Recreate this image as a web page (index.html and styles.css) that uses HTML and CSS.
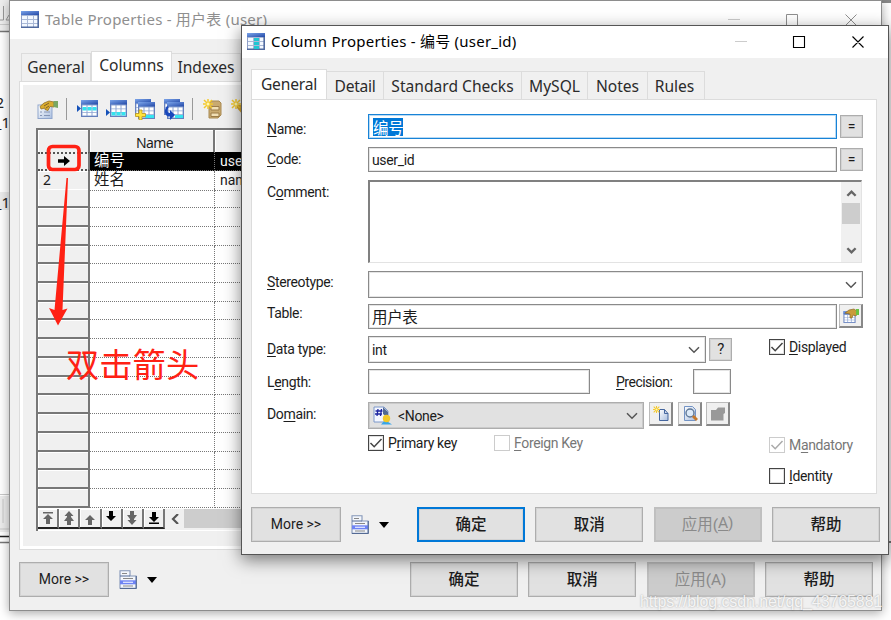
FILE: index.html
```html
<!DOCTYPE html>
<html lang="zh-CN">
<head>
<meta charset="utf-8">
<title>Column Properties</title>
<link rel="stylesheet" href="styles.css">
</head>
<body>
<svg width="0" height="0" class="defs">
  <defs>
    <linearGradient id="blue" x1="0" y1="0" x2="1" y2="1"><stop offset="0" stop-color="#7ca5ea"/><stop offset="1" stop-color="#2349a8"/></linearGradient>
    <linearGradient id="sheet" x1="0" y1="0" x2="1" y2="1"><stop offset="0" stop-color="#fff"/><stop offset="1" stop-color="#a9bedf"/></linearGradient>
    <symbol id="tbl" viewBox="0 0 18 17">
      <rect x=".5" y=".5" width="17" height="16" fill="#a9b8d6" stroke="#8f9fc8"/><rect width="18" height="4" fill="url(#blue)"/>
      <path d="M1 5h5v3H1zM7 5h5v3H7zM13 5h4v3h-4zM1 9h5v3H1zM7 9h5v3H7zM13 9h4v3h-4zM1 13h5v3H1zM7 13h5v3H7zM13 13h4v3h-4z" fill="#f3f8ff"/><path d="M17.200 4v12.300H0" fill="none" stroke="#506a9f" stroke-width="1.6"/>
    </symbol>
    <symbol id="grid" viewBox="0 0 17 17">
      <rect x=".5" y=".5" width="16" height="16" fill="#8da4d2" stroke="#647fbd"/><rect width="17" height="4.5" fill="url(#blue)"/>
      <path d="M1.500 5.500h4v3h-4zM6.500 5.500h4v3h-4zM11.500 5.500h4v3h-4zM1.500 9.300h4v3h-4zM6.500 9.300h4v3h-4zM11.500 9.300h4v3h-4zM1.500 13h4v2.500h-4zM6.500 13h4v2.500h-4zM11.500 13h4v2.500h-4z" fill="#fff"/>
    </symbol>
    <symbol id="prop" viewBox="0 0 21 19">
      <rect x="1" y="5" width="14" height="13.500" fill="url(#sheet)" stroke="#8fa5cc"/><path d="M3 12h2m2 0h6M3 15.500h2m2 0h6" stroke="#8595b5" stroke-width="1.2"/>
      <path d="M3 6.500l4-3.500 5-2 5 1v5l-4-.5-2 4-3-1V8L4 9z" fill="#d9ab2e" stroke="#94712a" stroke-width=".8"/><path d="M7 6l5-3M9 8l3-2" stroke="#81602a"/><path d="M16.500 1H21v7l-4.500-1z" fill="#79a763"/>
    </symbol>
    <symbol id="menu" viewBox="0 0 18 19">
      <path d="M1 .7h10V6h6v12.300H1z" fill="#f3f6fb" stroke="#8496b8" stroke-width="1.1"/><path d="M1 6h10" stroke="#536a96"/><path d="M3 3.500h5M4 8.500h10M4 16h10" stroke="#888" stroke-width="1.2"/><path d="M1 10.300h16v4H1z" fill="#6d83f4"/><path d="M4 12.300h10" stroke="#dfe4ff" stroke-width="1.3"/><path d="M17.300 6v12.600H1" stroke="#4d648f" fill="none"/>
    </symbol>
    <symbol id="burst" viewBox="0 0 10 10"><path d="M5 0v10M0 5h10M1 1l8 8M9 1L1 9" stroke="#f4c92d" stroke-width="1.5"/><circle cx="5" cy="5" r="1.500" fill="#fff8b0"/></symbol>
    <symbol id="chev" viewBox="0 0 12 8"><path d="M1 1.300l5 5 5-5" fill="none" stroke="currentColor" stroke-width="1.5"/></symbol>
    <symbol id="chevbold" viewBox="0 0 12 8"><path d="M1.500 1l4.500 4.500L10.500 1" fill="none" stroke="currentColor" stroke-width="2.600"/></symbol>
    <symbol id="tick" viewBox="0 0 16 16"><path d="M2.500 8l3.700 3.700L13.500 4" fill="none" stroke="currentColor" stroke-width="1.500"/></symbol>
  </defs>
</svg>
<div class="desktop">
  <div class="behind">
    <svg width="10" height="620" viewBox="0 0 10 620">
      <path d="M0 0h10v31H0z" fill="#eee"/><path d="M3.500 6v14H0M9 15l-3 5h4" fill="none" stroke="#999"/><path d="M0 24.500h10" stroke="#ccc"/><path d="M0 31.500h10" stroke="#777" stroke-width="1.500"/><path d="M0 192h10v18H0zM0 496h10v36H0z" fill="#ececec"/><path d="M0 494.500h10M3 499v24M0 529h10" fill="none" stroke="#c8c8c8"/><path d="M0 536.500h10" stroke="#222" stroke-width="1.500"/><path d="M0 542.500h10" stroke="#777" stroke-width="1.500"/>
    </svg>
    <span class="bt b1">2</span><span class="bt b2">_1</span><span class="bt b3">_1</span>
  </div>
  <div class="behind-right"></div>

  <section class="window back">
    <header class="title">
      <svg class="ticon" width="18" height="17"><use href="#tbl"/></svg>
      <span class="ttext">Table Properties - 用户表 (user)</span>
      <svg class="controls" width="130" height="12" viewBox="0 0 130 12"><path d="M0 5.500h12" stroke="#ccc"/><path d="M58.500.5h11v11h-11zM117.500.5l11 11m0-11l-11 11" fill="none" stroke="currentColor"/></svg>
    </header>
    <nav class="tabs">
      <span class="tab w1">General</span><span class="tab on w2">Columns</span><span class="tab w3">Indexes</span>
    </nav>
    <div class="sheet">
      <div class="toolbar">
        <svg width="21" height="19"><use href="#prop"/></svg>
        <i class="sep"></i>
        <svg class="g1" width="21" height="18" viewBox="0 0 21 18"><use href="#grid" x="4" width="17" height="17"/><path d="M5.500 7h4v3.500h-4zM10.500 7h4v3.500h-4zM15.500 7h4v3.500h-4z" fill="#35e3ef"/><path d="M0 5l4 3.500L0 12z" fill="#1552b9"/></svg>
        <svg class="g2" width="21" height="18" viewBox="0 0 21 18"><use href="#grid" x="4" width="17" height="17"/><path d="M5.500 12h4v3.500h-4zM10.500 12h4v3.500h-4zM15.500 12h4v3.500h-4z" fill="#35e3ef"/><path d="M0 9l4 3.500L0 16z" fill="#1552b9"/></svg>
        <svg class="g2" width="21" height="21" viewBox="0 0 21 21"><use href="#grid" x="0" width="16" height="16"/><use href="#grid" x="3" y="3" width="17" height="17"/><path d="M10 16h9v3h-9z" fill="#35e3ef"/><path d="M4 11h3v3.500h3.500v3H7V21H4v-3.500H.5v-3H4z" fill="#ffe43c" stroke="#b8941c" stroke-width=".8"/></svg>
        <svg class="g2" width="21" height="21" viewBox="0 0 21 21"><use href="#grid" x="0" width="16" height="16"/><use href="#grid" x="3" y="3" width="17" height="17"/><path d="M11 16h8v3h-8z" fill="#35e3ef"/><path d="M3 7c-4 5-2 11 3 10.500V21l5-5-5-5v3C3 14 2.500 10.500 5 8z" fill="#1948bc"/></svg>
        <i class="sep s2"></i>
        <svg width="19" height="20" viewBox="0 0 19 20"><path d="M6 5l3-3h7l2 2v12l-3 3H6z" fill="#c9aa70" stroke="#a98a53"/><path d="M8 7.500h8v3.500H8zM8 14h8v3.500H8z" fill="#f1dfb5" stroke="#9c7c48"/><use href="#burst" width="10" height="10"/></svg>
        <svg class="g3" width="19" height="20" viewBox="0 0 19 20"><path d="M6 6h9v10h-3L6 9z" fill="#d5a530"/><use href="#burst" width="10" height="10"/></svg>
      </div>
      <div class="table">
        <div class="thead"><span class="rowhead"></span><span class="th">Name</span><span class="th"></span></div>
        <div class="tr sel"><span class="rowhead"><svg width="12" height="10" viewBox="0 0 12 10"><path d="M0 3.300h6V0l6 5-6 5V6.700H0z"/></svg></span><span class="td">编号</span><span class="td">user_id</span></div>
        <div class="tr"><span class="rowhead num">2</span><span class="td">姓名</span><span class="td">name</span></div>
        <div class="tr"><span class="rowhead"></span><span class="td"></span><span class="td"></span></div>
        <div class="tr"><span class="rowhead"></span><span class="td"></span><span class="td"></span></div>
        <div class="tr"><span class="rowhead"></span><span class="td"></span><span class="td"></span></div>
        <div class="tr"><span class="rowhead"></span><span class="td"></span><span class="td"></span></div>
        <div class="tr"><span class="rowhead"></span><span class="td"></span><span class="td"></span></div>
        <div class="tr"><span class="rowhead"></span><span class="td"></span><span class="td"></span></div>
        <div class="tr"><span class="rowhead"></span><span class="td"></span><span class="td"></span></div>
        <div class="tr"><span class="rowhead"></span><span class="td"></span><span class="td"></span></div>
        <div class="tr"><span class="rowhead"></span><span class="td"></span><span class="td"></span></div>
        <div class="tr"><span class="rowhead"></span><span class="td"></span><span class="td"></span></div>
        <div class="tr"><span class="rowhead"></span><span class="td"></span><span class="td"></span></div>
        <div class="tr"><span class="rowhead"></span><span class="td"></span><span class="td"></span></div>
        <div class="tr"><span class="rowhead"></span><span class="td"></span><span class="td"></span></div>
        <div class="tr"><span class="rowhead"></span><span class="td"></span><span class="td"></span></div>
        <div class="tr"><span class="rowhead"></span><span class="td"></span><span class="td"></span></div>
        <div class="tr"><span class="rowhead"></span><span class="td"></span><span class="td"></span></div>
        <div class="tr"><span class="rowhead"></span><span class="td"></span><span class="td"></span></div>
        <div class="navbar">
          <span class="nb"><svg width="10" height="12" viewBox="0 0 10 12"><path d="M0 0h10v1.500H0zM5 2l5 5H7v5H3V7H0z"/></svg></span>
          <span class="nb"><svg width="10" height="14" viewBox="0 0 10 14"><path d="M5 0l4.500 5H7v1l3 4H7v4H3v-4H0l3-4V5H.5z"/></svg></span>
          <span class="nb low"><svg width="10" height="10" viewBox="0 0 10 10"><path d="M5 0l5 5H7v5H3V5H0z"/></svg></span>
          <span class="nb k up"><svg width="10" height="10" viewBox="0 0 10 10"><path d="M5 10l5-5H7V0H3v5H0z"/></svg></span>
          <span class="nb"><svg width="10" height="14" viewBox="0 0 10 14"><path d="M5 14l4.500-5H7V8l3-4H7V0H3v4H0l3 4v1H.5z"/></svg></span>
          <span class="nb k"><svg width="10" height="12" viewBox="0 0 10 12"><path d="M0 12h10v-1.500H0zM5 10l5-5H7V0H3v5H0z"/></svg></span>
          <span class="scrollleft"><svg width="8" height="10" viewBox="0 0 8 10"><path d="M7 0L2 5l5 5" fill="none" stroke="#555" stroke-width="2.200"/></svg></span>
          <span class="track"></span>
        </div>
      </div>
    </div>
    <footer class="foot">
      <span class="btn more">More &gt;&gt;</span>
      <svg class="micon" width="18" height="19"><use href="#menu"/></svg>
      <svg class="caret" width="10" height="6" viewBox="0 0 10 6"><path d="M0 0h10L5 6z"/></svg>
      <span class="btn ok">确定</span><span class="btn">取消</span><span class="btn dis">应用(A)</span><span class="btn">帮助</span>
    </footer>
  </section>

  <section class="window front">
    <header class="title">
      <svg class="ticon" width="18" height="17" viewBox="0 0 18 17"><use href="#tbl" width="18" height="17"/><path d="M7 5h5v3H7zM7 9h5v3H7zM7 13h5v3H7z" fill="#20c6d2"/></svg>
      <span class="ttext">Column Properties - 编号 (user_id)</span>
      <svg class="controls" width="130" height="12" viewBox="0 0 130 12"><path d="M0 5.500h12" stroke="#ccc"/><path d="M58.500.5h11v11h-11zM117.500.5l11 11m0-11l-11 11" fill="none" stroke="currentColor" stroke-width="1.100"/></svg>
    </header>
    <nav class="tabs">
      <span class="tab on f1">General</span><span class="tab f2">Detail</span><span class="tab f3">Standard Checks</span><span class="tab f4">MySQL</span><span class="tab f5">Notes</span><span class="tab f6">Rules</span>
    </nav>
    <div class="sheet form">
      <div class="row r-name"><label><u>N</u>ame:</label><span class="field focus"><mark>编号</mark></span><span class="sq">=</span></div>
      <div class="row r-code"><label><u>C</u>ode:</label><span class="field">user_id</span><span class="sq">=</span></div>
      <div class="row r-comment"><label>C<u>o</u>mment:</label><div class="area"><div class="vscroll"><svg class="flip" width="11" height="8"><use href="#chevbold"/></svg><i class="thumb"></i><svg class="down" width="11" height="8"><use href="#chevbold"/></svg></div></div></div>
      <div class="row r-stereo"><label><u>S</u>tereotype:</label><span class="field combo wide"><svg width="12" height="8"><use href="#chev"/></svg></span></div>
      <div class="row r-table"><label>Table:</label><span class="field cjk">用户表</span><span class="tool first"><svg width="17" height="16" viewBox="0 0 17 16"><use href="#grid" x="1" y="3" width="13" height="12"/><path d="M3 5l4-3 5-1 4 3-2 4-3-1-1 3H8V6z" fill="#c99b3b" stroke="#8c6a2b" stroke-width=".7"/><path d="M14 1h3v6h-3z" fill="#69c242"/></svg></span></div>
      <div class="row r-type"><label><u>D</u>ata type:</label><span class="field combo mid">int<svg width="12" height="8"><use href="#chev"/></svg></span><span class="sq q">?</span><span class="check c-disp"><i><svg width="16" height="16"><use href="#tick"/></svg></i><b><u>D</u>isplayed</b></span></div>
      <div class="row r-len"><label>L<u>e</u>ngth:</label><span class="field short"></span><label class="prec"><u>P</u>recision:</label><span class="field tiny"></span></div>
      <div class="row r-dom"><label>Do<u>m</u>ain:</label><span class="field combo domain"><svg class="dicon" width="19" height="19" viewBox="0 0 19 19"><path d="M1 1h10l4 4v11H1z" fill="#f4f7ff" stroke="#7d98c9"/><path d="M5 3L4 10M8.500 3l-1 7M2.500 5h7M2 8h7" stroke="#1c25a0" stroke-width="1.300"/><path d="M10 1l5 5v6l-5-4z" fill="#526a93"/><path d="M8 18.500l4-4.500 7 4.500z" fill="#38a6e8"/><circle cx="13.500" cy="12.500" r="3.700" fill="#f3c929"/></svg>&lt;None&gt;<svg width="12" height="8"><use href="#chev"/></svg></span>
        <span class="tool t1"><svg width="16" height="16" viewBox="0 0 16 16"><path d="M6.500 3.500h5l3.500 4v7h-8.500z" fill="url(#sheet)" stroke="#45669f"/><path d="M11.500 3.500v4H15" fill="none" stroke="#45669f"/><use href="#burst" width="7" height="7"/></svg></span>
        <span class="tool t2"><svg width="16" height="16" viewBox="0 0 16 16"><path d="M2.500.5h8l3 3v11h-11z" fill="url(#sheet)" stroke="#7293c5"/><circle cx="8" cy="7" r="4" fill="#dceaf8" stroke="#5f7897" stroke-width="1.400"/><path d="M11 10l4 4" stroke="#c5782b" stroke-width="3"/></svg></span>
        <span class="tool t3"><svg width="16" height="16" viewBox="0 0 16 16"><path d="M1 4h5l2-2.500h7V7l-1.500 1v6.500H1z" fill="#999"/></svg></span></div>
      <div class="row r-key"><span class="check"><i><svg width="16" height="16"><use href="#tick"/></svg></i><b>P<u>r</u>imary key</b></span><span class="check off c-for"><i></i><b><u>F</u>oreign Key</b></span><span class="check off c-man"><i><svg width="16" height="16"><use href="#tick"/></svg></i><b>M<u>a</u>ndatory</b></span></div>
      <div class="row r-id"><span class="check c-id"><i></i><b><u>I</u>dentity</b></span></div>
    </div>
    <footer class="foot">
      <span class="btn more">More &gt;&gt;</span>
      <svg class="micon" width="18" height="19"><use href="#menu"/></svg>
      <svg class="caret" width="10" height="6" viewBox="0 0 10 6"><path d="M0 0h10L5 6z"/></svg>
      <span class="btn ok def">确定</span><span class="btn">取消</span><span class="btn dis">应用(<u>A</u>)</span><span class="btn">帮助</span>
    </footer>
  </section>

  <svg class="mark" width="250" height="340" viewBox="0 0 250 340"><rect x="48.500" y="146.500" width="30.500" height="23" rx="4" fill="none" stroke="#ff2114" stroke-width="3.700"/><path d="M66.500 178h1.500L62.500 310l5-1.500L58 325.500 49 308l5.500 2z" fill="#ff2114"/></svg>
  <span class="note">双击箭头</span>
  <span class="watermark">https://blog.csdn.net/qq_43765881</span>
</div>
</body>
</html>
```
FILE: styles.css
```css
* { box-sizing: border-box; }
body { margin: 0; background: #fff; color: #1c1c1c; font-family: Roboto, "Noto Sans CJK SC", sans-serif; font-size: 14px; }
svg { display: block; flex: none; }
u { text-underline-offset: 2px; text-decoration-thickness: 1px; }
.defs { position: absolute; }
.desktop { position: relative; width: 891px; height: 620px; overflow: hidden; background: #fff; }
.behind { position: absolute; left: 0; top: 0; width: 10px; height: 620px; overflow: hidden; }
.bt { position: absolute; font: 15px/18px "Noto Sans", sans-serif; color: #222; }
.b1 { top: 93px; right: 6px; }
.b2 { top: 113px; right: 0; }
.b3 { top: 193px; right: 0; }
.behind-right { position: absolute; left: 881px; top: 0; width: 10px; height: 543px; background: #fff; border-top: 3px solid #888; border-bottom: 2px solid #777; }

.window { position: absolute; display: flex; flex-direction: column; background: #f0f0f0; }
.back { left: 9px; top: 0; width: 873px; height: 611px; border: 1px solid #8d8d8d; box-shadow: 0 2px 10px rgba(0,0,0,.35); }
.front { left: 241px; top: 25px; width: 648px; height: 530px; border: 1px solid #555; box-shadow: 0 5px 16px rgba(0,0,0,.5); }
.title { display: flex; align-items: center; background: #fff; font-family: "Noto Sans", "Noto Sans CJK SC", sans-serif; font-size: 15px; letter-spacing: .23px; white-space: nowrap; flex: none; }
.back .title { height: 38px; padding-left: 11px; color: #8f8f8f; }
.front .title { height: 32px; padding-left: 5px; color: #000; }
.ttext { margin-left: 6px; }
.back .ttext, .front .ttext { margin-top: -3px; }
.back .ticon, .front .ticon { margin-top: -2px; }
.controls { margin-left: auto; }
.back .controls, .front .controls { margin-right: 23px; }

.tabs { display: flex; align-items: flex-end; flex: none; font: 15.600px/24px "Noto Sans", sans-serif; color: #2b2b2b; }
.back .tabs { height: 42px; padding-left: 11px; }
.front .tabs { height: 41px; padding-left: 9px; }
.tab { height: 28px; border: 1px solid #dcdcdc; border-width: 1px 1px 0 0; text-align: center; white-space: nowrap; padding-top: 2px; }
.tab.on { height: 31px; background: #fff; border-left-width: 1px; margin-bottom: -1px; }
.back .tab { padding-top: 1px; }
.w1 { width: 70px; border-left-width: 1px; }
.w2 { width: 81px; }
.w3 { width: 69px; }
.f1 { width: 76px; letter-spacing: -.2px; }
.f2 { width: 57px; letter-spacing: -.3px; }
.f3 { width: 138px; }
.f4 { width: 66px; }
.f5 { width: 60px; }
.f6 { width: 57px; padding-right: 3px; }

.back .sheet { margin-left: 9px; width: 846px; height: 469px; border: 1px solid #dcdcdc; box-shadow: inset 0 0 0 3px #fff; padding: 15px 16px 0; flex: none; }
.toolbar { display: flex; align-items: center; height: 24px; margin-left: 1px; }
.sep { width: 1px; height: 22px; background: #999; margin: 0 10px 0 8px; }
.s2 { margin: 0 10px 0 7px; }
.g2 { margin-left: 8px; }
.g3 { margin-left: 9px; }
.table { margin-top: 7px; width: 780px; height: 403px; border: 2px solid #777; border-bottom: 0; border-right: 0; background: #fff; display: flex; flex-direction: column; font-family: "Noto Sans", "Noto Sans CJK SC", sans-serif; }
.thead, .tr { display: grid; grid-template-columns: 52px 125px 1fr; flex: none; }
.thead { height: 22px; background: #f0f0f0; }
.th { border-right: 2px solid #777; border-bottom: 1px solid #777; text-align: center; line-height: 25px; padding-left: 6px; box-shadow: inset 1px 1px #fff; letter-spacing: -.6px; }
.tr { height: 18.720px; }
.rowhead { border-right: 2px solid #777; border-bottom: 2px solid #777; background: #f0f0f0; box-shadow: inset 1px 1px #fff; }
.td { border-right: 1px dotted #777; border-bottom: 1px dotted #777; padding-left: 4px; line-height: 18px; overflow: hidden; white-space: nowrap; font-size: 15.400px; }
.td + .td { font: 14px/18px Roboto, sans-serif; padding-left: 5px; }
.sel .td { background: #000; color: #fff; }
.sel .rowhead { border-top: 2px dotted #555; border-bottom: 2px dotted #555; display: flex; align-items: center; padding-left: 20px; box-shadow: none; }
.num { padding-left: 5px; line-height: 18px; }
.navbar { display: flex; height: 21px; margin-top: 1px; background: #f0f0f0; }
.nb { width: 21.200px; height: 20px; border-right: 2px solid #777; border-bottom: 2px solid #222; display: flex; align-items: center; justify-content: center; fill: #666; box-shadow: inset 1px 1px #fff; }
.nb.k { fill: #000; }
.nb.low { padding-top: 4px; }
.nb.up { padding-bottom: 4px; }
.scrollleft { width: 19px; display: flex; align-items: center; justify-content: center; }
.track { flex: 1; height: 19px; background: #cdcdcd; }

.foot { display: flex; align-items: center; flex: none; height: 35px; }
.back .foot { margin: 12px 0 0 9px; }
.front .foot { margin: 13px 0 0 9px; }
.btn { width: 108px; height: 35px; margin-right: 10.300px; padding-bottom: 4px; border: 1px solid #adadad; background: #e1e1e1; box-shadow: inset 0 0 0 1px rgba(0,0,0,.06); display: flex; align-items: center; justify-content: center; font-size: 15.500px; font-weight: 500; white-space: nowrap; flex: none; }
.btn.more { width: 90px; font: 14px Roboto, sans-serif; margin-right: 10px; padding-bottom: 1px; }
.btn.dis { background: #ccc; border-color: #bfbfbf; color: #8a8a8a; font-weight: 400; }
.btn.def { border: 2px solid #0078d7; }
.caret { margin: 0 0 0 10px; }
.ok { margin-left: 28px; }
.back .ok { margin-left: 253px; }

.form { margin-left: 9px; width: 626px; height: 395px; background: #fff; border: 1px solid #dcdcdc; flex: none; padding-left: 15px; letter-spacing: -.35px; }
.row { display: flex; align-items: flex-start; white-space: nowrap; }
.row label { width: 101px; line-height: 18px; flex: none; }
.field { width: 469px; height: 25px; border: 1px solid #8a8a8a; box-shadow: inset 0 0 0 1px rgba(0,0,0,.1); background: #fff; padding-left: 3px; display: flex; align-items: center; flex: none; }
.field.focus { border-color: #1883d7; box-shadow: inset 0 0 0 1px rgba(24,131,215,.3); }
mark { background: #0078d7; color: #fff; font: 15.500px/18px "Noto Sans CJK SC", sans-serif; margin-left: 1px; }
.cjk { font-size: 15.500px; padding-bottom: 2px; }
.combo { height: 27px; }
.combo svg:last-child { margin-left: auto; margin-right: 5px; color: #555; }
.wide { width: 495px; }
.mid { width: 338px; }
.short { width: 222px; }
.tiny { width: 38px; }
.domain { width: 276px; background: #e1e1e1; border-color: #adadad; }
.dicon { margin: 0 6px 0 1px; }
.sq { width: 23px; height: 23px; margin: 1px 0 0 3px; border: 1px solid #adadad; box-shadow: inset 0 0 0 1px rgba(0,0,0,.06); background: #e1e1e1; text-align: center; line-height: 21px; flex: none; }
.q { margin-top: 2px; font-size: 15px; }
.tool { width: 24px; height: 24px; border: 1px solid #bbb; border-right: 2px solid #888; border-bottom: 2px solid #888; background: #f0f0f0; display: flex; align-items: center; justify-content: center; flex: none; }
.first { margin-left: 2px; }
.t1 { margin-left: 5px; }
.t2 { margin-left: 5px; }
.t3 { margin-left: 4px; }
.area { width: 494px; height: 83px; border: 2px solid #808080; border-right: 1px solid #e3e3e3; border-bottom: 1px solid #e3e3e3; display: flex; justify-content: flex-end; }
.vscroll { width: 20px; background: #f0f0f0; display: flex; flex-direction: column; align-items: center; color: #666; padding-top: 7px; }
.flip { transform: scaleY(-1); }
.thumb { width: 18px; height: 21px; background: #cdcdcd; margin-top: 6px; }
.down { margin-top: 23px; }
.r-name { margin-top: 14px; }
.r-code, .r-comment, .r-stereo, .r-dom { margin-top: 8px; }
.r-table, .r-len, .r-key { margin-top: 6px; }
.r-type { margin-top: 7px; }
.r-name label { margin-top: 6px; }
.r-code label, .r-dom label { margin-top: 3px; }
.r-len label { margin-top: 4px; }
.r-comment label { margin-top: 3px; }
.r-stereo label { margin-top: 2px; }
.r-type label { margin-top: 4px; }
.row .prec { width: 77px; margin-left: 26px; letter-spacing: -.5px; }
.check { display: flex; align-items: center; height: 16px; }
.check i { width: 16px; height: 16px; border: 1px solid #444; box-shadow: inset 0 0 0 1px rgba(0,0,0,.12); margin-right: 4px; flex: none; color: #444; }
.check i svg { margin: -1px; }
.check b { font-weight: 400; line-height: 18px; }
.off { color: #777; }
.off i { border-color: #ccc; color: #aaa; box-shadow: none; }
.c-disp { margin: 3px 0 0 37px; }
.r-key { padding-left: 101px; }
.r-key .check:first-child { width: 126px; }
.c-for { width: 275px; }
.c-man { margin-top: 2px; }
.r-id { margin-top: 15px; padding-left: 502px; }

.mark { position: absolute; left: 0; top: 0; }
.note { position: absolute; left: 66px; top: 339px; font: 33.300px/48px "Noto Sans CJK SC", sans-serif; color: #ff2114; white-space: nowrap; }
.watermark { position: absolute; left: 640px; top: 592px; font: 16px/20px "Liberation Sans", sans-serif; letter-spacing: -.1px; color: rgba(255,255,255,.85); text-shadow: 0 0 2px rgba(0,0,0,.35); white-space: nowrap; }
```
